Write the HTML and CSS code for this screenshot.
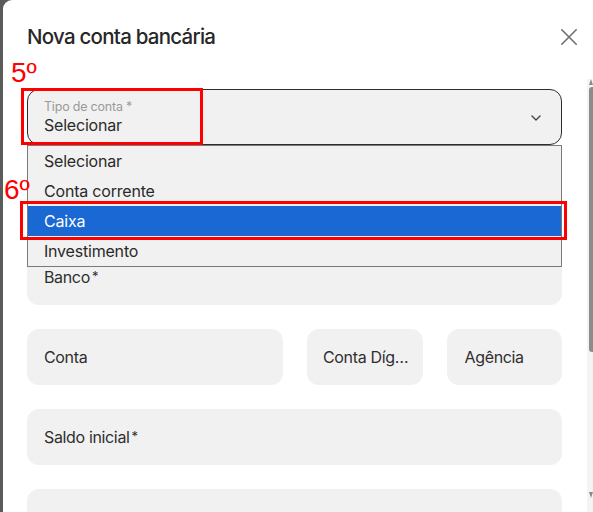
FILE: index.html
```html
<!DOCTYPE html>
<html lang="pt-BR">
<head>
<meta charset="utf-8">
<title>Nova conta bancária</title>
<link rel="stylesheet" href="styles.css">
</head>
<body>
<div class="screen">
  <div class="backdrop"></div>
  <div class="modal">
    <header class="modal-head">
      <h2 class="modal-title">Nova conta bancária</h2>
      <button class="close" type="button" aria-label="Fechar">
        <svg width="16" height="16" viewBox="0 0 16 16"><path d="M0.8 0.8 L15.2 15.2 M15.2 0.8 L0.8 15.2" stroke="#6f6f6f" stroke-width="1.6" fill="none" stroke-linecap="round"/></svg>
      </button>
    </header>
    <div class="form">
      <div class="select-wrap">
        <div class="field select">
          <div class="select-text">
            <span class="select-label">Tipo de conta *</span>
            <span class="select-value">Selecionar</span>
          </div>
          <svg class="chevron" width="10" height="6" viewBox="0 0 10 6"><path d="M1 1 L5 5 L9 1" stroke="#444" stroke-width="1.4" fill="none" stroke-linecap="round" stroke-linejoin="round"/></svg>
        </div>
        <ul class="options">
          <li class="option">Selecionar</li>
          <li class="option">Conta corrente</li>
          <li class="option option-active">Caixa</li>
          <li class="option">Investimento</li>
        </ul>
      </div>
      <div class="field"></div>
      <div class="field"><span class="field-text">Banco<span class="req">*</span></span></div>
      <div class="row">
        <div class="field"><span class="field-text">Conta</span></div>
        <div class="field field-tight"><span class="field-text">Conta Dígito</span></div>
        <div class="field field-agencia"><span class="field-text">Agência</span></div>
      </div>
      <div class="field"><span class="field-text">Saldo inicial<span class="req">*</span></span></div>
      <div class="field"></div>
    </div>
  </div>
  <div class="scrollbar">
    <span class="sb-arrow sb-up"></span>
    <span class="sb-thumb"></span>
    <span class="sb-track"></span>
    <span class="sb-arrow sb-down"></span>
  </div>

  <span class="step step-5">5º</span>
  <span class="mark mark-5"></span>
  <span class="step step-6">6º</span>
  <span class="mark mark-6"></span>
</div>
</body>
</html>
```
FILE: styles.css
```css
* { box-sizing: border-box; }
html, body { margin: 0; padding: 0; background: #ffffff; }
body { font-family: Inter, "Noto Sans", sans-serif; color: #2b2b2b; }

.screen {
  position: relative;
  width: 593px;
  height: 512px;
  overflow: hidden;
  display: flex;
  align-items: flex-start;
  background: #5b5b5b;
}

.backdrop {
  width: 3px;
  flex: none;
}

.modal {
  width: 584px;
  height: 512px;
  flex: none;
  background: #ffffff;
  border-top-left-radius: 9px;
  overflow: hidden;
}

.modal-head {
  display: flex;
  justify-content: space-between;
  align-items: flex-start;
  padding: 24px 10px 0 24px;
}

.modal-title {
  margin: 0;
  font-size: 20.5px;
  line-height: 26px;
  font-weight: 500;
  letter-spacing: -0.75px;
  color: #272727;
}

.close {
  border: 0;
  background: none;
  padding: 0;
  margin-top: 5px;
  width: 16px;
  height: 16px;
  display: block;
}
.close svg { display: block; }

.form {
  display: flex;
  flex-direction: column;
  gap: 24px;
  padding: 39px 25px 0 24px;
}

.field {
  flex: none;
  height: 56px;
  background: #f1f1f1;
  border-radius: 12px;
  display: flex;
  align-items: center;
  padding: 0 16px 0 17px;
  min-width: 0;
}

.field-text {
  font-size: 16px;
  letter-spacing: -0.35px;
  color: #2f2f2f;
  white-space: nowrap;
  overflow: hidden;
  text-overflow: ellipsis;
}

.req {
  font-size: 13px;
  margin-left: 2px;
  vertical-align: 2px;
}

.field-tight { padding: 0 12px 0 16px; }
.field-agencia { padding-left: 18px; }

.select-wrap { position: relative; }

.select {
  border: 1px solid #2d2d2d;
  justify-content: space-between;
  padding: 0 20px 0 16px;
}

.select-text {
  display: flex;
  flex-direction: column;
}

.select-label {
  font-size: 12.5px;
  line-height: 16px;
  color: #9a9a9a;
  letter-spacing: -0.2px;
}

.select-value {
  font-size: 16px;
  line-height: 20px;
  color: #2a2a2a;
  letter-spacing: -0.2px;
}

.chevron { display: block; margin-top: 2px; }

.options {
  position: absolute;
  z-index: 2;
  top: 56px;
  left: 0;
  right: 0;
  margin: 0;
  padding: 0;
  list-style: none;
  background: #f1f1f1;
  border: 1px solid #7a7a7a;
}

.option {
  height: 30px;
  line-height: 30px;
  padding-left: 16px;
  font-size: 16px;
  color: #2a2a2a;
  letter-spacing: -0.2px;
}

.option-active {
  background: #1a68d3;
  color: #ffffff;
}

.row {
  display: grid;
  grid-template-columns: 256px 1fr 1fr;
  gap: 24px;
}

.scrollbar {
  width: 6px;
  height: 512px;
  flex: none;
  display: flex;
  flex-direction: column;
  padding-top: 79px;
  padding-bottom: 14px;
  background: linear-gradient(#ffffff 0 79px, #f4f4f4 79px);
}

.sb-arrow {
  display: block;
  width: 0;
  height: 0;
  margin-left: 2px;
  border-left: 2px solid transparent;
  border-right: 2px solid transparent;
}
.sb-up { border-bottom: 6px solid #8a8a8a; }
.sb-down { border-top: 6px solid #8a8a8a; }

.sb-thumb {
  display: block;
  height: 265px;
  margin: 2px 0 0 2px;
  background: #8c8c8c;
  border-radius: 3px 0 0 3px;
}

.sb-track { flex: 1; }

.step {
  position: absolute;
  z-index: 4;
  font-family: "Liberation Sans", Arial, sans-serif;
  font-size: 28px;
  line-height: 28px;
  color: #ff0000;
}
.step-5 { left: 11px; top: 59px; }
.step-6 { left: 4px; top: 176px; }

.mark {
  position: absolute;
  border: 3px solid #ff0000;
  z-index: 3;
}
.mark-5 { left: 21px; top: 88px; width: 182px; height: 57px; }
.mark-6 { left: 20px; top: 201px; width: 547px; height: 39px; }
```
